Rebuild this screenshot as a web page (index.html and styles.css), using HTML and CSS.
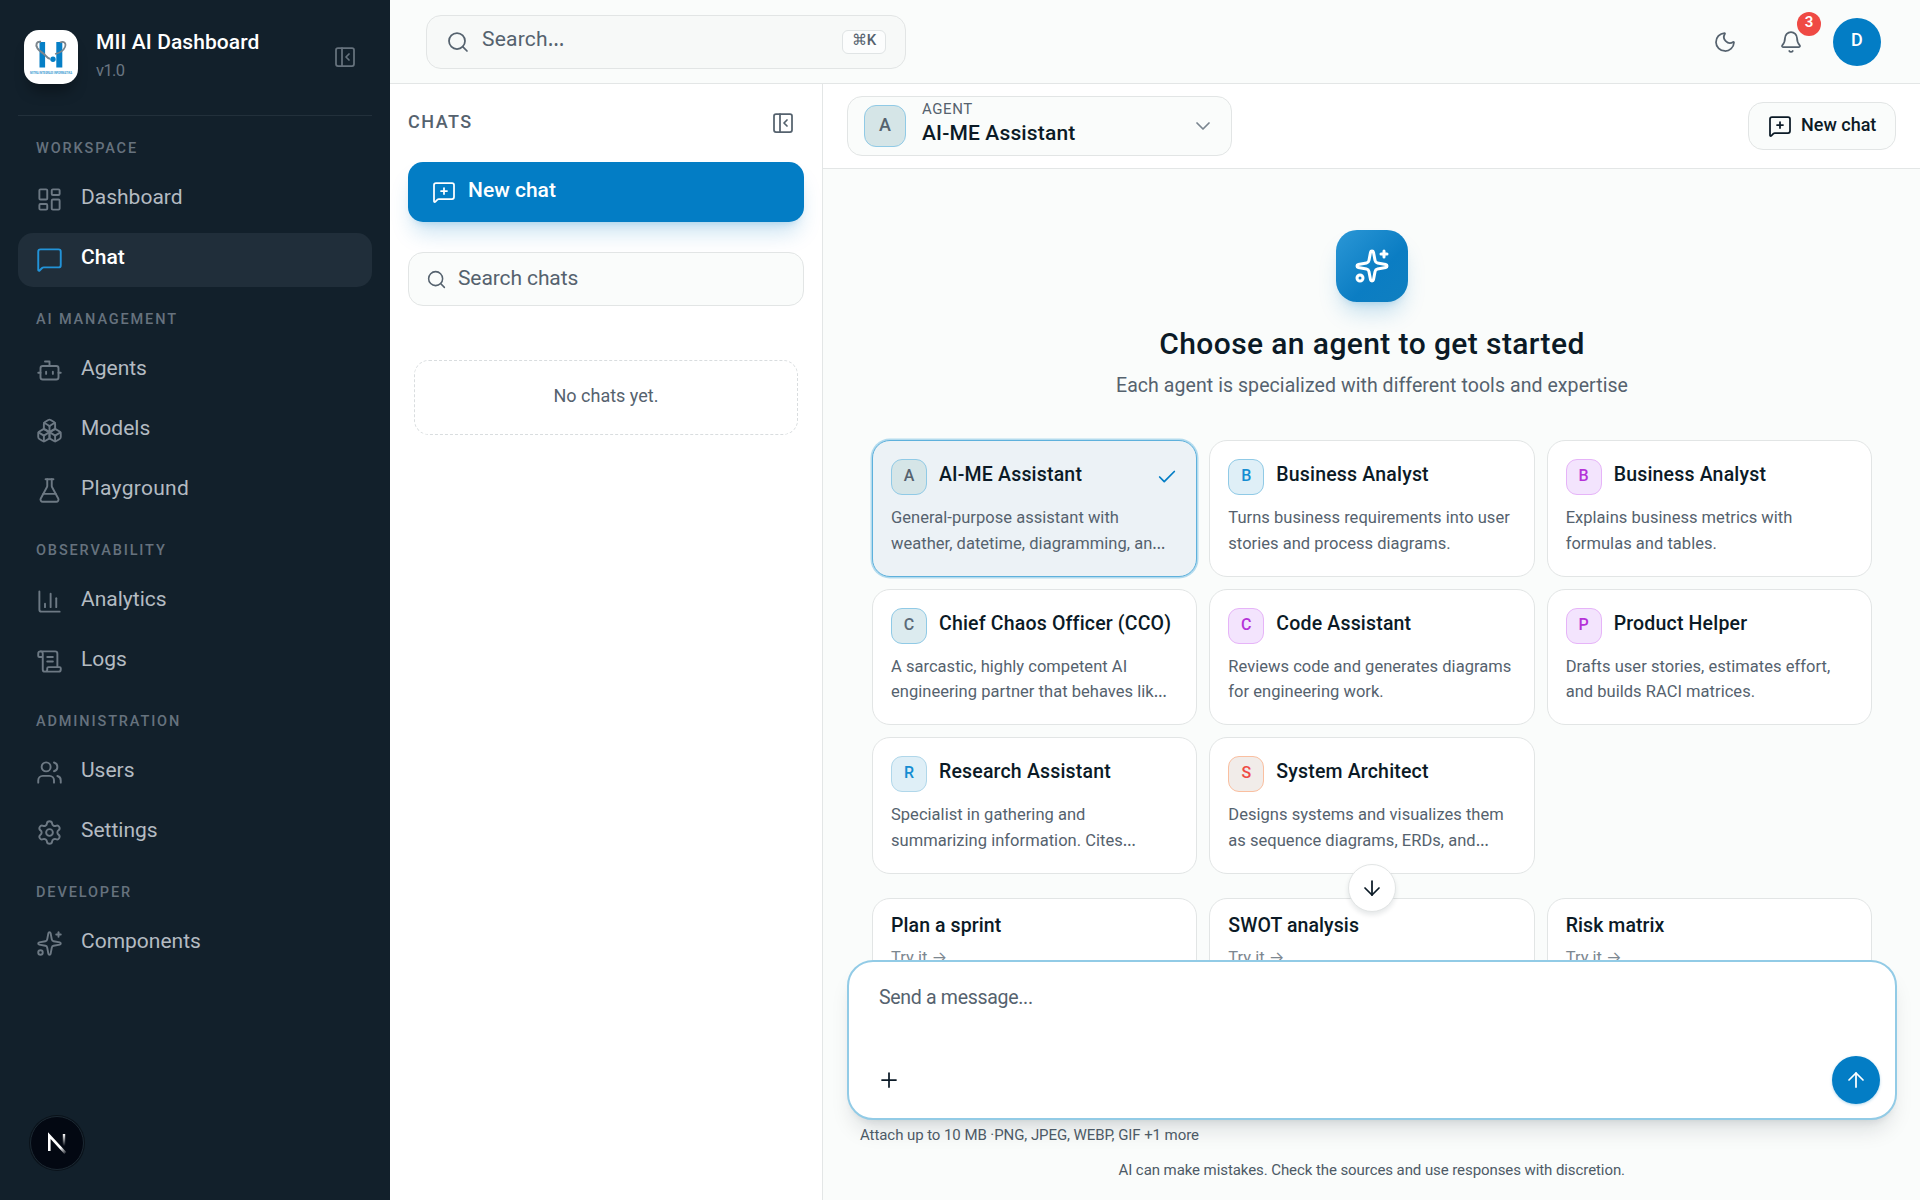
FILE: index.html
```html
<!DOCTYPE html>
<html lang="en">
<head>
<meta charset="utf-8">
<title>MII AI Dashboard</title>
<link rel="stylesheet" href="styles.css">
</head>
<body>
<svg class="defs" width="0" height="0" aria-hidden="true">
  <symbol id="i-panel" viewBox="0 0 24 24"><rect width="18" height="18" x="3" y="3" rx="2"/><path d="M9 3v18"/><path d="m16 15-3-3 3-3"/></symbol>
  <symbol id="i-dash" viewBox="0 0 24 24"><rect width="7" height="9" x="3" y="3" rx="1"/><rect width="7" height="5" x="14" y="3" rx="1"/><rect width="7" height="9" x="14" y="12" rx="1"/><rect width="7" height="5" x="3" y="16" rx="1"/></symbol>
  <symbol id="i-chat" viewBox="0 0 24 24"><path d="M22 17a2 2 0 0 1-2 2H6.828a2 2 0 0 0-1.414.586l-2.202 2.202A.71.71 0 0 1 2 21.286V5a2 2 0 0 1 2-2h16a2 2 0 0 1 2 2z"/></symbol>
  <symbol id="i-chatplus" viewBox="0 0 24 24"><path d="M22 17a2 2 0 0 1-2 2H6.828a2 2 0 0 0-1.414.586l-2.202 2.202A.71.71 0 0 1 2 21.286V5a2 2 0 0 1 2-2h16a2 2 0 0 1 2 2z"/><path d="M12 8v6"/><path d="M9 11h6"/></symbol>
  <symbol id="i-bot" viewBox="0 0 24 24"><path d="M12 8V4H8"/><rect width="16" height="12" x="4" y="8" rx="2"/><path d="M2 14h2"/><path d="M20 14h2"/><path d="M15 13v2"/><path d="M9 13v2"/></symbol>
  <symbol id="i-boxes" viewBox="0 0 24 24"><path d="M2.97 12.92A2 2 0 0 0 2 14.63v3.24a2 2 0 0 0 .97 1.71l3 1.8a2 2 0 0 0 2.06 0L12 19v-5.5l-5-3-4.03 2.42Z"/><path d="m7 16.5-4.74-2.85"/><path d="m7 16.5 5-3"/><path d="M7 16.5v5.17"/><path d="M12 13.5V19l3.97 2.38a2 2 0 0 0 2.06 0l3-1.8a2 2 0 0 0 .97-1.71v-3.24a2 2 0 0 0-.97-1.71L17 10.5l-5 3Z"/><path d="m17 16.5-5-3"/><path d="m17 16.5 4.74-2.85"/><path d="M17 16.5v5.17"/><path d="M7.97 4.42A2 2 0 0 0 7 6.13v4.37l5 3 5-3V6.13a2 2 0 0 0-.97-1.71l-3-1.8a2 2 0 0 0-2.06 0l-3 1.8Z"/><path d="M12 8 7.26 5.15"/><path d="m12 8 4.74-2.85"/><path d="M12 13.5V8"/></symbol>
  <symbol id="i-flask" viewBox="0 0 24 24"><path d="M14 2v6a2 2 0 0 0 .245.96l5.51 10.08A2 2 0 0 1 18 22H6a2 2 0 0 1-1.755-2.96l5.51-10.08A2 2 0 0 0 10 8V2"/><path d="M6.453 15h11.094"/><path d="M8.5 2h7"/></symbol>
  <symbol id="i-chart" viewBox="0 0 24 24"><path d="M3 3v16a2 2 0 0 0 2 2h16"/><path d="M18 17V9"/><path d="M13 17V5"/><path d="M8 17v-3"/></symbol>
  <symbol id="i-scroll" viewBox="0 0 24 24"><path d="M15 12h-5"/><path d="M15 8h-5"/><path d="M19 17V5a2 2 0 0 0-2-2H4"/><path d="M8 21h12a2 2 0 0 0 2-2v-1a1 1 0 0 0-1-1H11a1 1 0 0 0-1 1v1a2 2 0 1 1-4 0V5a2 2 0 1 0-4 0v2a1 1 0 0 0 1 1h3"/></symbol>
  <symbol id="i-users" viewBox="0 0 24 24"><path d="M16 21v-2a4 4 0 0 0-4-4H6a4 4 0 0 0-4 4v2"/><path d="M16 3.128a4 4 0 0 1 0 7.744"/><path d="M22 21v-2a4 4 0 0 0-3-3.87"/><circle cx="9" cy="7" r="4"/></symbol>
  <symbol id="i-gear" viewBox="0 0 24 24"><path d="M9.671 4.136a2.34 2.34 0 0 1 4.659 0 2.34 2.34 0 0 0 3.319 1.915 2.34 2.34 0 0 1 2.33 4.033 2.34 2.34 0 0 0 0 3.831 2.34 2.34 0 0 1-2.33 4.033 2.34 2.34 0 0 0-3.319 1.915 2.34 2.34 0 0 1-4.659 0 2.34 2.34 0 0 0-3.32-1.915 2.34 2.34 0 0 1-2.33-4.033 2.34 2.34 0 0 0 0-3.831A2.34 2.34 0 0 1 6.35 6.051a2.34 2.34 0 0 0 3.319-1.915"/><circle cx="12" cy="12" r="3"/></symbol>
  <symbol id="i-spark" viewBox="0 0 24 24"><path d="M11.017 2.814a1 1 0 0 1 1.966 0l1.051 5.558a2 2 0 0 0 1.594 1.594l5.558 1.051a1 1 0 0 1 0 1.966l-5.558 1.051a2 2 0 0 0-1.594 1.594l-1.051 5.558a1 1 0 0 1-1.966 0l-1.051-5.558a2 2 0 0 0-1.594-1.594l-5.558-1.051a1 1 0 0 1 0-1.966l5.558-1.051a2 2 0 0 0 1.594-1.594z"/><path d="M20 2v4"/><path d="M22 4h-4"/><circle cx="4" cy="20" r="2"/></symbol>
  <symbol id="i-search" viewBox="0 0 24 24"><path d="m21 21-4.34-4.34"/><circle cx="11" cy="11" r="8"/></symbol>
  <symbol id="i-moon" viewBox="0 0 24 24"><path d="M20.985 12.486a9 9 0 1 1-9.473-9.472c.405-.022.617.46.402.803a6 6 0 0 0 8.268 8.268c.344-.215.825-.004.803.401"/></symbol>
  <symbol id="i-bell" viewBox="0 0 24 24"><path d="M10.268 21a2 2 0 0 0 3.464 0"/><path d="M3.262 15.326A1 1 0 0 0 4 17h16a1 1 0 0 0 .74-1.673C19.41 13.956 18 12.499 18 8A6 6 0 0 0 6 8c0 4.499-1.411 5.956-2.738 7.326"/></symbol>
  <symbol id="i-chev" viewBox="0 0 24 24"><path d="m6 9 6 6 6-6"/></symbol>
  <symbol id="i-check" viewBox="0 0 24 24"><path d="M20 6 9 17l-5-5"/></symbol>
  <symbol id="i-down" viewBox="0 0 24 24"><path d="M12 5v14"/><path d="m19 12-7 7-7-7"/></symbol>
  <symbol id="i-up" viewBox="0 0 24 24"><path d="m5 12 7-7 7 7"/><path d="M12 19V5"/></symbol>
  <symbol id="i-plus" viewBox="0 0 24 24"><path d="M5 12h14"/><path d="M12 5v14"/></symbol>
</svg>

<div class="app">
  <aside class="sidebar">
    <div class="brand">
      <div class="logo">
        <svg width="54" height="54" viewBox="0 0 54 54">
          <rect x="15.500" y="12" width="5.600" height="25.500" fill="#067fc6"/>
          <rect x="32.300" y="12" width="6" height="25.500" fill="#067fc6"/>
          <path d="M17 11.800c-4.500-.8-5.800 3-3.500 6.500 2.500 3.500 6 4.700 8 7.200 1.500 1.800 2.500 3.200 4.500 3.200" fill="none" stroke="#7b858d" stroke-width="2"/>
          <path d="M36 12.500c4-2 6.500.8 5 4.500-1.500 4-5.500 6-10 7" fill="none" stroke="#7b858d" stroke-width="1.700"/>
          <circle cx="29" cy="29.300" r="2.700" fill="#067fc6"/>
          <text class="logo-text" x="6" y="43.500" textLength="42" lengthAdjust="spacingAndGlyphs">MITRA INTEGRASI INFORMATIKA</text>
        </svg>
      </div>
      <div class="brand-text">
        <div class="brand-name">MII AI Dashboard</div>
        <div class="brand-ver">v1.0</div>
      </div>
      <svg class="ic s24 brand-toggle"><use href="#i-panel"/></svg>
    </div>
    <nav class="nav">
      <div class="nav-label">WORKSPACE</div>
      <a class="nav-item"><svg class="ic s27"><use href="#i-dash"/></svg><span class="t">Dashboard</span></a>
      <a class="nav-item active"><svg class="ic s27"><use href="#i-chat"/></svg><span class="t">Chat</span></a>
      <div class="nav-label">AI MANAGEMENT</div>
      <a class="nav-item"><svg class="ic s27"><use href="#i-bot"/></svg><span class="t">Agents</span></a>
      <a class="nav-item"><svg class="ic s27"><use href="#i-boxes"/></svg><span class="t">Models</span></a>
      <a class="nav-item"><svg class="ic s27"><use href="#i-flask"/></svg><span class="t wide">Playground</span></a>
      <div class="nav-label">OBSERVABILITY</div>
      <a class="nav-item"><svg class="ic s27"><use href="#i-chart"/></svg><span class="t">Analytics</span></a>
      <a class="nav-item"><svg class="ic s27"><use href="#i-scroll"/></svg><span class="t">Logs</span></a>
      <div class="nav-label">ADMINISTRATION</div>
      <a class="nav-item"><svg class="ic s27"><use href="#i-users"/></svg><span class="t">Users</span></a>
      <a class="nav-item"><svg class="ic s27"><use href="#i-gear"/></svg><span class="t">Settings</span></a>
      <div class="nav-label">DEVELOPER</div>
      <a class="nav-item"><svg class="ic s27"><use href="#i-spark"/></svg><span class="t">Components</span></a>
    </nav>
    <div class="dev-badge">
      <svg width="22" height="22" viewBox="0 0 22 22">
        <defs>
          <linearGradient id="g1" x1="0" y1="0" x2="1" y2="1"><stop offset=".7" stop-color="#fff"/><stop offset="1" stop-color="#fff" stop-opacity=".2"/></linearGradient>
          <linearGradient id="g2" gradientUnits="userSpaceOnUse" x1="0" y1="2" x2="0" y2="14"><stop offset="0" stop-color="#fff"/><stop offset="1" stop-color="#fff" stop-opacity="0"/></linearGradient>
        </defs>
        <path d="M3.300 19V3.600L19.300 21" fill="none" stroke="url(#g1)" stroke-width="2.600"/>
        <path d="M18 2v12" fill="none" stroke="url(#g2)" stroke-width="2.400"/>
      </svg>
    </div>
  </aside>

  <div class="main">
    <header class="topbar">
      <div class="search">
        <svg class="ic s24"><use href="#i-search"/></svg>
        <span class="t search-t">Search<span class="el">…</span></span>
        <span class="kbd"><span class="t">⌘K</span></span>
      </div>
      <div class="top-actions">
        <svg class="ic s24"><use href="#i-moon"/></svg>
        <div class="bell"><svg class="ic s24"><use href="#i-bell"/></svg><span class="count"><span class="t">3</span></span></div>
        <div class="me"><span class="t">D</span></div>
      </div>
    </header>

    <div class="body">
      <section class="chats">
        <div class="chats-head"><span class="t">CHATS</span><svg class="ic s24"><use href="#i-panel"/></svg></div>
        <div class="new-chat"><svg class="ic s24"><use href="#i-chatplus"/></svg><span class="t">New chat</span></div>
        <div class="chat-search"><svg class="ic s21"><use href="#i-search"/></svg><span class="t">Search chats</span></div>
        <div class="empty"><span class="t">No chats yet.</span></div>
      </section>

      <section class="pane">
        <div class="pane-head">
          <div class="picker">
            <div class="av av-lg av-a"><span class="t">A</span></div>
            <div class="picker-text"><div class="picker-label">AGENT</div><div class="picker-name">AI-ME Assistant</div></div>
            <svg class="ic s24"><use href="#i-chev"/></svg>
          </div>
          <div class="btn"><svg class="ic s24"><use href="#i-chatplus"/></svg><span class="t">New chat</span></div>
        </div>

        <div class="scroll">
          <div class="hero-tile"><svg class="ic s36"><use href="#i-spark"/></svg></div>
          <h1 class="title">Choose an agent to get started</h1>
          <p class="sub">Each agent is specialized with different tools and expertise</p>
          <div class="cards">
            <div class="card selected">
              <div class="card-head"><div class="av av-a"><span class="t">A</span></div><span class="t name">AI-ME Assistant</span><svg class="ic s22"><use href="#i-check"/></svg></div>
              <p class="desc">General-purpose assistant with<br>weather, datetime, diagramming, an<span class="el">…</span></p>
            </div>
            <div class="card">
              <div class="card-head"><div class="av av-b"><span class="t">B</span></div><span class="t name">Business Analyst</span></div>
              <p class="desc">Turns business requirements into user<br>stories and process diagrams.</p>
            </div>
            <div class="card">
              <div class="card-head"><div class="av av-p"><span class="t">B</span></div><span class="t name">Business Analyst</span></div>
              <p class="desc">Explains business metrics with<br>formulas and tables.</p>
            </div>
            <div class="card">
              <div class="card-head"><div class="av av-c"><span class="t">C</span></div><span class="t name">Chief Chaos Officer (CCO)</span></div>
              <p class="desc">A sarcastic, highly competent AI<br>engineering partner that behaves lik<span class="el">…</span></p>
            </div>
            <div class="card">
              <div class="card-head"><div class="av av-p"><span class="t">C</span></div><span class="t name">Code Assistant</span></div>
              <p class="desc">Reviews code and generates diagrams<br>for engineering work.</p>
            </div>
            <div class="card">
              <div class="card-head"><div class="av av-p"><span class="t">P</span></div><span class="t name">Product Helper</span></div>
              <p class="desc">Drafts user stories, estimates effort,<br>and builds RACI matrices.</p>
            </div>
            <div class="card">
              <div class="card-head"><div class="av av-r"><span class="t">R</span></div><span class="t name">Research Assistant</span></div>
              <p class="desc">Specialist in gathering and<br>summarizing information. Cites<span class="el">…</span></p>
            </div>
            <div class="card">
              <div class="card-head"><div class="av av-s"><span class="t">S</span></div><span class="t name">System Architect</span></div>
              <p class="desc">Designs systems and visualizes them<br>as sequence diagrams, ERDs, and<span class="el">…</span></p>
            </div>
          </div>
          <div class="quick">
            <div class="qcard"><div class="q-title">Plan a sprint</div><div class="q-try">Try it <span class="arrow">→</span></div></div>
            <div class="qcard"><div class="q-title">SWOT analysis</div><div class="q-try">Try it <span class="arrow">→</span></div></div>
            <div class="qcard"><div class="q-title">Risk matrix</div><div class="q-try">Try it <span class="arrow">→</span></div></div>
          </div>
        </div>

        <div class="dock">
          <div class="to-bottom"><svg class="ic s24"><use href="#i-down"/></svg></div>
          <div class="composer">
            <div class="placeholder">Send a message...</div>
            <div class="composer-bar">
              <svg class="ic s24"><use href="#i-plus"/></svg>
              <div class="send"><svg class="ic s24"><use href="#i-up"/></svg></div>
            </div>
          </div>
          <div class="attach">Attach up to 10 MB ·PNG, JPEG, WEBP, GIF +1 more</div>
          <div class="disclaimer">AI can make mistakes. Check the sources and use responses with discretion.</div>
        </div>
      </section>
    </div>
  </div>
</div>
</body>
</html>
```
FILE: styles.css
```css
* { box-sizing: border-box; }
body {
  margin: 0;
  font-family: Roboto, "Liberation Sans", sans-serif;
  color: #0b1a26;
  background: #fafcfb;
}
p, h1 { margin: 0; }
.defs { position: absolute; }

.ic { display: block; flex: none; fill: none; stroke: currentColor; stroke-width: 1.75; stroke-linecap: round; stroke-linejoin: round; }
.s21 { width: 21px; height: 21px; }
.s22 { width: 22px; height: 22px; }
.s24 { width: 24px; height: 24px; }
.s27 { width: 27px; height: 27px; }
.s36 { width: 36px; height: 36px; }

/* optical lift: text sits slightly above the centre line of its row */
.t { display: block; padding-bottom: .18em; white-space: nowrap; }
.el { font-family: "Noto Sans", sans-serif; line-height: 0; }
.arrow { font-family: Inter, sans-serif; line-height: 0; }

.app { display: flex; width: 1920px; height: 1200px; overflow: hidden; }

/* sidebar */
.sidebar { flex: none; width: 390px; padding: 0 18px; background: #12202b; position: relative; }
.brand { display: flex; align-items: center; height: 115.5px; padding: 0 15px 0 6px; border-bottom: 1.5px solid #22303b; }
.logo { width: 54px; height: 54px; border-radius: 15px; background: #fff; box-shadow: 0 12px 14px -5px rgba(0,0,0,.35); }
.logo svg { display: block; }
.logo-text { font: 700 3.2px Roboto, sans-serif; fill: #3b9bd2; }
.brand-text { flex: 1; margin-left: 18px; padding-bottom: 4px; }
.brand-name { font-size: 21px; font-weight: 500; line-height: 30px; letter-spacing: .08px; color: #fff; }
.brand-ver { font-size: 16.5px; line-height: 24px; letter-spacing: -.6px; color: #6a7682; margin-top: 2px; }
.brand-toggle { color: #66727d; }

.nav { display: flex; flex-direction: column; gap: 6px; padding-top: 6px; }
.nav-label { height: 45px; line-height: 54px; padding-left: 18px; font-size: 14.5px; font-weight: 500; letter-spacing: 1.87px; color: #66727e; }
.nav-item { display: flex; align-items: center; gap: 18px; height: 54px; padding: 0 18px; border-radius: 15px; font-size: 21px; color: #b4bbc2; }
.nav-item .t { padding-bottom: .22em; }
.nav-item .wide { letter-spacing: .3px; }
.nav-item .ic { color: #6d7984; stroke-width: 1.7; }
.nav-item.active { background: #202e3a; color: #fff; font-weight: 500; }
.nav-item.active .ic { color: #2293d8; }

.dev-badge { position: absolute; left: 30px; bottom: 30px; width: 54px; height: 54px; border-radius: 50%; background: #030812; border: 1.5px solid #1c2933; box-shadow: 0 0 0 1px #0a121a; display: flex; align-items: center; justify-content: center; }

/* top bar */
.main { flex: 1; min-width: 0; display: flex; flex-direction: column; }
.topbar { flex: none; height: 84px; display: flex; align-items: center; justify-content: space-between; padding: 0 39px 0 36px; border-bottom: 1px solid #e3e6e6; background: #fafcfb; }
.search { width: 480px; height: 54px; border: 1px solid #e2e5e5; border-radius: 15px; background: #f7f9f8; display: flex; align-items: center; gap: 12px; padding: 0 19px 0 19px; color: #55626e; }
.search-t { flex: 1; font-size: 21px; letter-spacing: .2px; line-height: 25px; }
.kbd { width: 44px; height: 24px; border: 1px solid #e0e4e5; border-radius: 6px; background: #fcfdfd; display: flex; align-items: center; justify-content: center; font-size: 15px; font-weight: 500; }
.top-actions { display: flex; align-items: center; color: #55626e; }
.bell { position: relative; margin: 0 30px 0 42px; }
.count { position: absolute; left: 18px; top: -18px; width: 24px; height: 24px; border-radius: 50%; background: #ef4a44; color: #fff; font-size: 15px; font-weight: 600; display: flex; align-items: center; justify-content: center; }
.me { width: 48px; height: 48px; border-radius: 50%; background: #037dc5; color: #fff; font-size: 18px; font-weight: 500; display: flex; align-items: center; justify-content: center; }

.body { flex: 1; display: flex; min-height: 0; }

/* chats column */
.chats { flex: none; width: 433px; padding: 15px 18px 0; background: #fff; border-right: 1px solid #e3e6e6; display: flex; flex-direction: column; }
.chats-head { display: flex; align-items: center; justify-content: space-between; height: 48px; padding: 0 9px 0 0; font-size: 18px; font-weight: 500; letter-spacing: 1.5px; color: #55626e; }
.new-chat { display: flex; align-items: center; gap: 12px; height: 60px; margin-top: 15px; padding-left: 24px; border-radius: 15px; background: #037dc5; color: #fff; font-size: 21px; font-weight: 500; box-shadow: 0 15px 22px -5px rgba(3,125,197,.22), 0 6px 9px -6px rgba(3,125,197,.25); }
.chat-search { display: flex; align-items: center; gap: 11px; height: 54px; margin-top: 30px; padding-left: 17px; border: 1px solid #e2e5e5; border-radius: 15px; background: #fafcfb; font-size: 21px; letter-spacing: -.1px; color: #55626e; }
.chat-search .t { padding-bottom: .06em; }
.empty { display: flex; align-items: center; justify-content: center; height: 75px; margin: 54px 6px 0; border: 1px dashed #d9dddf; border-radius: 15px; font-size: 18px; color: #55626e; }

/* conversation pane */
.pane { flex: 1; min-width: 0; display: flex; flex-direction: column; background: #fafcfb; }
.pane-head { flex: none; height: 85px; padding: 0 24px; display: flex; align-items: center; justify-content: space-between; background: #fff; border-bottom: 1px solid #e3e6e6; }
.picker { width: 385px; height: 60px; padding: 0 16px 0 16px; border: 1px solid #e2e5e5; border-radius: 15px; background: #fafcfb; display: flex; align-items: center; color: #7a858f; }
.picker-text { flex: 1; margin-left: 16px; }
.picker-label { font-size: 15px; line-height: 20px; letter-spacing: .6px; color: #55626e; margin-top: -6px; }
.picker-name { font-size: 21px; font-weight: 500; line-height: 28px; letter-spacing: .15px; color: #0b1a26; }
.btn { display: flex; align-items: center; gap: 9px; height: 48px; width: 148px; padding-left: 19px; border: 1px solid #e2e5e5; border-radius: 15px; background: #fafcfb; font-size: 18px; font-weight: 500; }

.av { flex: none; width: 36px; height: 36px; border-radius: 11px; border: 1.5px solid; display: flex; align-items: center; justify-content: center; font-size: 16px; font-weight: 500; }
.av .t { padding-bottom: .14em; }
.av-lg { width: 42px; height: 42px; border-radius: 12px; font-size: 18px; }
.av-a { background: #d5e5e7; border-color: #90cae6; color: #55626e; }
.av-b { background: #dfeff7; border-color: #90cae6; color: #158dd2; }
.av-c { background: #dcebef; border-color: #90cae6; color: #5b6a78; }
.av-p { background: #f3e4fd; border-color: #e6b4f8; color: #b532d8; }
.av-r { background: #dfeff7; border-color: #b0d7ea; color: #158dd2; }
.av-s { background: #f1ece9; border-color: #fabfa0; color: #ef4a44; }

.scroll { flex: 1; min-height: 0; overflow: hidden; padding: 61px 48px 0 49px; display: flex; flex-direction: column; }
.hero-tile { flex: none; align-self: center; width: 72px; height: 72px; margin-right: 1px; border-radius: 21px; background: linear-gradient(135deg, #2b97d6, #0b7dc3 60%, #0f7fc0); color: #fff; display: flex; align-items: center; justify-content: center; box-shadow: 0 15px 22px -5px rgba(3,125,197,.22), 0 6px 9px -6px rgba(3,125,197,.25); }
.hero-tile .ic { stroke-width: 2; }
.title { margin-top: 24px; text-align: center; font-size: 30px; font-weight: 500; line-height: 36px; letter-spacing: .4px; }
.sub { margin-top: 10px; text-align: center; font-size: 19.5px; line-height: 28px; letter-spacing: .07px; color: #55626e; }
.cards, .quick { flex: none; display: grid; grid-template-columns: repeat(3, 1fr); column-gap: 12px; }
.cards { margin-top: 40px; grid-auto-rows: 136.5px; row-gap: 12px; }
.card, .qcard { background: #fff; border: 1px solid #e2e5e5; border-radius: 18px; padding: 18px; }
.card.selected { background: #ecf2f6; border-color: #5eb1dc; box-shadow: 0 0 0 1.5px #b3dbee; }
.card-head { display: flex; align-items: center; height: 36px; }
.card-head .name { flex: 1; margin-left: 12px; font-size: 19.5px; font-weight: 500; letter-spacing: .18px; padding-bottom: .24em; }
.card-head .ic { color: #037dc5; stroke-width: 1.9; }
.desc { margin-top: 10px; font-size: 16.5px; line-height: 25.5px; letter-spacing: .03px; color: #55626e; white-space: nowrap; }
.quick { margin-top: 24px; }
.qcard { height: 100px; padding: 13px 18px; }
.q-title { font-size: 19.5px; font-weight: 500; line-height: 27px; letter-spacing: .08px; }
.q-try { margin-top: 7px; font-size: 16.5px; line-height: 24px; color: #7d8790; }

/* message dock */
.dock { position: relative; flex: none; height: 240.5px; padding: 0 23.5px 0 24px; }
.to-bottom { position: absolute; left: 525px; top: -96px; width: 48px; height: 48px; border-radius: 50%; background: #fff; border: 1px solid #e2e5e5; box-shadow: 0 3px 5px rgba(11,26,38,.1); display: flex; align-items: center; justify-content: center; }
.composer { height: 160px; padding: 22px 14.5px 14px 30px; border: 2px solid #92cbe6; border-radius: 26px; background: #fff; box-shadow: 0 15px 22px -6px rgba(11,26,38,.13), 0 6px 9px -6px rgba(11,26,38,.12); display: flex; flex-direction: column; justify-content: space-between; }
.placeholder { font-size: 19.5px; line-height: 27px; letter-spacing: -.3px; color: #55626e; }
.composer-bar { display: flex; align-items: center; justify-content: space-between; }
.composer-bar > .ic { margin-left: -2px; }
.send { width: 48px; height: 48px; border-radius: 50%; background: #037dc5; color: #fff; display: flex; align-items: center; justify-content: center; box-shadow: 0 1px 3px rgba(3,125,197,.3); }
.attach { margin: 5px 0 0 13px; font-size: 15px; line-height: 20px; letter-spacing: -.07px; color: #4d5a66; }
.disclaimer { margin-top: 15px; text-align: center; font-size: 15px; line-height: 20px; letter-spacing: -.08px; color: #4d5a66; }
```
